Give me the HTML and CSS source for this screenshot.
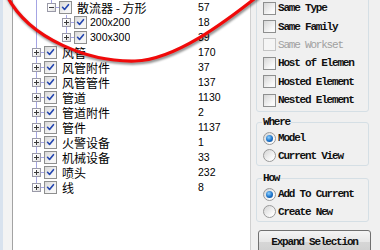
FILE: index.html
```
<!DOCTYPE html>
<html>
<head>
<meta charset="utf-8">
<link rel="stylesheet" href="styles.css">
</head>
<body>
<div class="app">
  <div class="edge"></div>
  <div class="tree">
    <div class="row"><div class="node"><span class="ind line"></span><span class="exp last"><span class="box minus"></span></span><span class="chk"><svg viewBox="0 0 13 13"><path d="M3 6.2 L5.4 8.8 L10 3.2"/></svg></span><span class="name">散流器 - 方形</span></div><span class="count">57</span></div>
    <div class="row"><div class="node"><span class="ind line"></span><span class="ind"></span><span class="exp"><span class="box"></span></span><span class="chk"><svg viewBox="0 0 13 13"><path d="M3 6.2 L5.4 8.8 L10 3.2"/></svg></span><span class="name num">200x200</span></div><span class="count">18</span></div>
    <div class="row"><div class="node"><span class="ind line"></span><span class="ind"></span><span class="exp last"><span class="box"></span></span><span class="chk"><svg viewBox="0 0 13 13"><path d="M3 6.2 L5.4 8.8 L10 3.2"/></svg></span><span class="name num">300x300</span></div><span class="count">39</span></div>
    <div class="row"><div class="node"><span class="exp"><span class="box"></span></span><span class="chk"><svg viewBox="0 0 13 13"><path d="M3 6.2 L5.4 8.8 L10 3.2"/></svg></span><span class="name">风管</span></div><span class="count">170</span></div>
    <div class="row"><div class="node"><span class="exp"><span class="box"></span></span><span class="chk"><svg viewBox="0 0 13 13"><path d="M3 6.2 L5.4 8.8 L10 3.2"/></svg></span><span class="name">风管附件</span></div><span class="count">37</span></div>
    <div class="row"><div class="node"><span class="exp"><span class="box"></span></span><span class="chk"><svg viewBox="0 0 13 13"><path d="M3 6.2 L5.4 8.8 L10 3.2"/></svg></span><span class="name">风管管件</span></div><span class="count">137</span></div>
    <div class="row"><div class="node"><span class="exp"><span class="box"></span></span><span class="chk"><svg viewBox="0 0 13 13"><path d="M3 6.2 L5.4 8.8 L10 3.2"/></svg></span><span class="name">管道</span></div><span class="count">1130</span></div>
    <div class="row"><div class="node"><span class="exp"><span class="box"></span></span><span class="chk"><svg viewBox="0 0 13 13"><path d="M3 6.2 L5.4 8.8 L10 3.2"/></svg></span><span class="name">管道附件</span></div><span class="count">2</span></div>
    <div class="row"><div class="node"><span class="exp"><span class="box"></span></span><span class="chk"><svg viewBox="0 0 13 13"><path d="M3 6.2 L5.4 8.8 L10 3.2"/></svg></span><span class="name">管件</span></div><span class="count">1137</span></div>
    <div class="row"><div class="node"><span class="exp"><span class="box"></span></span><span class="chk"><svg viewBox="0 0 13 13"><path d="M3 6.2 L5.4 8.8 L10 3.2"/></svg></span><span class="name">火警设备</span></div><span class="count">1</span></div>
    <div class="row"><div class="node"><span class="exp"><span class="box"></span></span><span class="chk"><svg viewBox="0 0 13 13"><path d="M3 6.2 L5.4 8.8 L10 3.2"/></svg></span><span class="name">机械设备</span></div><span class="count">33</span></div>
    <div class="row"><div class="node"><span class="exp"><span class="box"></span></span><span class="chk"><svg viewBox="0 0 13 13"><path d="M3 6.2 L5.4 8.8 L10 3.2"/></svg></span><span class="name">喷头</span></div><span class="count">232</span></div>
    <div class="row"><div class="node"><span class="exp last"><span class="box"></span></span><span class="chk"><svg viewBox="0 0 13 13"><path d="M3 6.2 L5.4 8.8 L10 3.2"/></svg></span><span class="name">线</span></div><span class="count">8</span></div>
  </div>
  <div class="side">
    <div class="group first">
      <div class="opt"><span class="cb"></span>Same Type</div>
      <div class="opt"><span class="cb"></span>Same Family</div>
      <div class="opt disabled"><span class="cb"></span>Same Workset</div>
      <div class="opt"><span class="cb"></span>Host of Elemen</div>
      <div class="opt"><span class="cb"></span>Hosted Element</div>
      <div class="opt"><span class="cb"></span>Nested Element</div>
    </div>
    <fieldset class="group where">
      <legend>Where</legend>
      <div class="opt radio"><span class="rb on"></span>Model</div>
      <div class="opt radio"><span class="rb"></span>Current View</div>
    </fieldset>
    <fieldset class="group how">
      <legend>How</legend>
      <div class="opt radio"><span class="rb on"></span>Add To Current</div>
      <div class="opt radio"><span class="rb"></span>Create New</div>
    </fieldset>
    <button class="btn">Expand Selection</button>
  </div>
  <svg class="mark" width="380" height="250" viewBox="0 0 380 250">
    <path d="M7 -4 C30 40, 90 62, 135 61 C175 60, 225 22, 258 -4"/>
  </svg>
</div>
</body>
</html>
```
FILE: styles.css
```
* { box-sizing: border-box; }
html, body { margin: 0; padding: 0; }
body { width: 380px; height: 250px; overflow: hidden; background: #f0f0f0; }

.app {
  position: relative;
  display: flex;
  width: 380px;
  height: 250px;
}

.edge {
  width: 13px;
  flex: none;
  background: linear-gradient(to right, #d8e2ee 0 3px, #f3f3f3 3px);
  border-right: 1px solid #a3a3a3;
}

.tree {
  width: 238px;
  flex: none;
  background: #fff;
  border-right: 1px solid #d0d0d0;
  padding-left: 16px;
  font-family: "Noto Sans CJK SC", "Liberation Sans", sans-serif;
  font-size: 12px;
  color: #000;
}

.row {
  display: grid;
  grid-template-columns: 169px auto;
  height: 15px;
  align-items: center;
  overflow: hidden;
}

.node {
  display: flex;
  align-items: center;
  height: 15px;
}

.ind, .exp {
  position: relative;
  width: 15px;
  height: 15px;
  flex: none;
  display: flex;
  align-items: center;
  justify-content: center;
}

.ind.line::before,
.exp::before {
  content: "";
  position: absolute;
  left: 7px;
  top: 0;
  bottom: 0;
  border-left: 1px solid #a4a4e4;
}
.exp.last::before { bottom: 7px; }
.exp::after {
  content: "";
  position: absolute;
  left: 7px;
  right: 0;
  top: 7px;
  border-top: 1px solid #a4a4e4;
}

.box {
  position: relative;
  z-index: 1;
  width: 9px;
  height: 9px;
  margin-left: -1px;
  border: 1px solid #9a9aa8;
  background: linear-gradient(135deg, #ffffff 30%, #dcdcdc);
}
.box::before {
  content: "";
  position: absolute;
  left: 1px;
  top: 3px;
  width: 5px;
  border-top: 1px solid #3b3b3b;
}
.box::after {
  content: "";
  position: absolute;
  left: 3px;
  top: 1px;
  height: 5px;
  border-left: 1px solid #3b3b3b;
}
.box.minus::after { display: none; }

.chk {
  width: 13px;
  height: 13px;
  flex: none;
  border: 1px solid #8e8f8f;
  background: linear-gradient(135deg, #d8d8d8, #f6f6f6 70%);
  display: flex;
}
.chk svg { width: 11px; height: 11px; }
.chk path { fill: none; stroke: #2446b0; stroke-width: 1.9; stroke-linejoin: round; stroke-linecap: round; }

.name {
  display: block;
  height: 15px;
  overflow: hidden;
  margin-left: 5px;
  white-space: pre;
  line-height: 15px;
}
.name.num {
  font-family: "Liberation Sans", sans-serif;
  font-size: 10.5px;
  margin-left: 3px;
}

.count {
  display: block;
  height: 15px;
  font-family: "Liberation Sans", sans-serif;
  font-size: 10.5px;
  line-height: 15px;
}

.side {
  flex: 1;
  background: #f0f0f0;
  padding-left: 5px;
  font-family: "Liberation Mono", monospace;
  font-size: 11px;
  font-weight: bold;
  letter-spacing: -1.2px;
  color: #111;
}

.group {
  width: 113px;
  margin: 0;
  border: 1px solid #d5dfe5;
  border-radius: 3px;
  padding: 0 0 0 6px;
}
.group.first {
  margin-top: -12px;
  padding-top: 10px;
  padding-bottom: 2px;
}
.group.where { margin-top: 4px; padding-bottom: 1px; }
.group.how { margin-top: 6px; padding-bottom: 1px; }

legend {
  padding: 0 1px;
  margin-left: -1px;
  line-height: 13px;
}

.opt {
  display: flex;
  align-items: center;
  height: 18.4px;
  white-space: nowrap;
}
.opt.radio { height: 17.5px; }
.opt.disabled { color: #a0a0a0; font-weight: normal; }

.cb {
  width: 13px;
  height: 13px;
  flex: none;
  margin-right: 2px;
  border: 1px solid #8e8f8f;
  background: linear-gradient(135deg, #d6d6d6, #fafafa 75%);
}
.disabled .cb {
  border-color: #c4c4c4;
  background: #f5f5f5;
}

.rb {
  width: 13px;
  height: 13px;
  flex: none;
  margin-right: 2px;
  border: 1px solid #9a9a9a;
  border-radius: 50%;
  background: linear-gradient(135deg, #d4d4d4, #fbfbfb 75%);
  display: flex;
  align-items: center;
  justify-content: center;
}
.rb.on::before {
  content: "";
  width: 7px;
  height: 7px;
  border-radius: 50%;
  background: radial-gradient(circle at 40% 35%, #8fd0ff, #1a72c8 55%, #0b3f8a);
}

.btn {
  display: block;
  width: 113px;
  height: 24px;
  margin: 8px 0 0 2px;
  border: 1px solid #707070;
  border-radius: 3px;
  background: linear-gradient(#f4f4f4, #e6e6e6 50%, #d6d6d6 51%, #cfcfcf);
  font-family: "Liberation Mono", monospace;
  font-size: 11px;
  font-weight: bold;
  letter-spacing: -1.2px;
  color: #111;
  padding: 0;
}

.mark {
  position: absolute;
  left: 0;
  top: 0;
  pointer-events: none;
  overflow: visible;
}
.mark path {
  fill: none;
  stroke: #f00a0a;
  stroke-width: 3.2;
  filter: drop-shadow(1px 2px 1.2px rgba(0, 0, 0, 0.45));
}
```
